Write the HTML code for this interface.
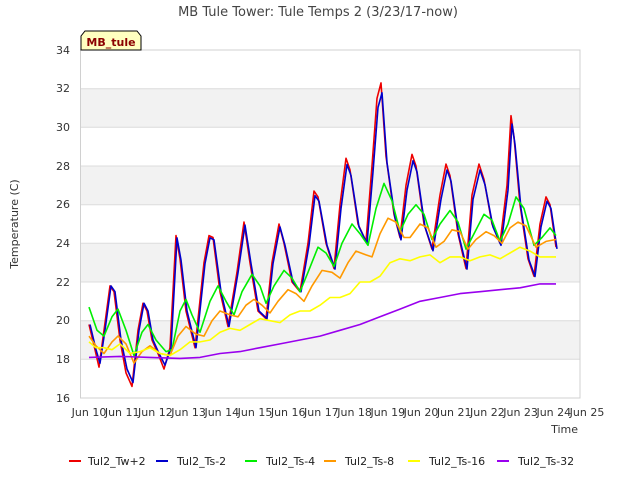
<!DOCTYPE html>
<html><head><meta charset="utf-8"><style>
body{margin:0;background:#fff;width:640px;height:480px;overflow:hidden;font-family:"DejaVu Sans","Liberation Sans",sans-serif}
</style></head><body>
<svg id="s" width="640" height="480" xmlns="http://www.w3.org/2000/svg" font-family="DejaVu Sans, Liberation Sans, sans-serif">
<rect width="640" height="480" fill="#fff"/>
<g fill="#f2f2f2">
<rect x="80" y="88.7" width="500" height="38.6"/>
<rect x="80" y="166" width="500" height="38.7"/>
<rect x="80" y="243.3" width="500" height="38.7"/>
<rect x="80" y="320.7" width="500" height="38.6"/>
</g>
<g stroke="#dcdcdc" stroke-width="1">
<line x1="80" y1="50" x2="580" y2="50"/><line x1="80" y1="88.7" x2="580" y2="88.7"/><line x1="80" y1="127.3" x2="580" y2="127.3"/><line x1="80" y1="166" x2="580" y2="166"/><line x1="80" y1="204.7" x2="580" y2="204.7"/><line x1="80" y1="243.3" x2="580" y2="243.3"/><line x1="80" y1="282" x2="580" y2="282"/><line x1="80" y1="320.7" x2="580" y2="320.7"/><line x1="80" y1="359.3" x2="580" y2="359.3"/>
</g>
<rect x="80.5" y="50" width="499.5" height="348" fill="none" stroke="#d0d0d0"/>
<g font-size="11" fill="#333" text-anchor="end">
<text x="70" y="54">34</text><text x="70" y="92">32</text><text x="70" y="131">30</text><text x="70" y="170">28</text><text x="70" y="208">26</text><text x="70" y="247">24</text><text x="70" y="286">22</text><text x="70" y="324">20</text><text x="70" y="363">18</text><text x="70" y="402">16</text>
</g>
<g id="xl" font-size="11" fill="#333" text-anchor="middle"></g>
<text x="578" y="433" font-size="11" fill="#333" text-anchor="end">Time</text>
<text x="18" y="224" font-size="11" fill="#333" text-anchor="middle" transform="rotate(-90 18 224)">Temperature (C)</text>
<text x="318" y="16" font-size="13" fill="#444" text-anchor="middle">MB Tule Tower: Tule Temps 2 (3/23/17-now)</text>
<path d="M81 50 L81 36 L85 31 L137 31 L141 36 L141 50 Z" fill="#ffffc0" stroke="#000" stroke-width="1"/>
<text x="111" y="46" font-size="11" font-weight="bold" fill="#8b0000" text-anchor="middle">MB_tule</text>
<g id="lines" fill="none" stroke-width="1.6" stroke-linejoin="round"></g>
<g font-size="11" fill="#222">
<line x1="69" y1="461" x2="81" y2="461" stroke="#e00" stroke-width="2"/><text x="88" y="465">Tul2_Tw+2</text>
<line x1="156" y1="461" x2="168" y2="461" stroke="#00c" stroke-width="2"/><text x="177" y="465">Tul2_Ts-2</text>
<line x1="245" y1="461" x2="257" y2="461" stroke="#0e0" stroke-width="2"/><text x="266" y="465">Tul2_Ts-4</text>
<line x1="324" y1="461" x2="336" y2="461" stroke="#f90" stroke-width="2"/><text x="345" y="465">Tul2_Ts-8</text>
<line x1="408" y1="461" x2="420" y2="461" stroke="#ff0" stroke-width="2"/><text x="429" y="465">Tul2_Ts-16</text>
<line x1="497" y1="461" x2="509" y2="461" stroke="#90e" stroke-width="2"/><text x="518" y="465">Tul2_Ts-32</text>
</g>
</svg>
<script>
var NS="http://www.w3.org/2000/svg";
var xl=document.getElementById('xl');
for(var d=10;d<=25;d++){var t=document.createElementNS(NS,'text');var x=89+(d-10)*33.2;t.setAttribute('x',x);t.setAttribute('y',416);t.textContent='Jun '+d;xl.appendChild(t);}
function Y(v){return 398-(v-16)*19.333;}
var red=[[89,19.8],[95,18.5],[99,17.6],[104,19.5],[110,21.8],[114,21.5],[120,19],[126,17.3],[132,16.6],[138,19.5],[143,20.9],[147,20.5],[152,19],[158,18.3],[164,17.5],[170,18.6],[176,24.4],[180,23.2],[186,20.5],[195,18.6],[204,23],[209,24.4],[213,24.3],[220,21.5],[228,19.7],[237,22.5],[244,25.1],[250,23],[258,20.5],[266,20.1],[272,23],[279,25],[284,24],[292,22],[300,21.5],[308,24],[314,26.7],[318,26.4],[326,24],[334,22.7],[340,26],[346,28.4],[350,27.8],[358,25],[366,24.1],[372,28],[377,31.5],[381,32.3],[386,28.5],[394,25.5],[400,24.3],[406,27],[412,28.6],[416,28],[424,25],[432,23.7],[440,26.5],[446,28.1],[450,27.5],[458,24.5],[466,22.7],[472,26.5],[479,28.1],[484,27.3],[492,25],[500,24],[507,27],[511,30.6],[514,29.5],[520,26],[528,23.2],[534,22.3],[540,25],[546,26.4],[550,26],[556,23.8]];
var blue=red.map(function(p){var v=p[1];var m=v>22?(v-22)*0.05:0;return [p[0]+1,v-m+ (v<18?0.2:0)];});
var green=[[89,20.7],[97,19.5],[104,19.2],[112,20.2],[118,20.6],[126,19.5],[134,18.2],[142,19.4],[148,19.8],[156,19],[166,18.4],[172,18.5],[180,20.5],[186,21.1],[192,20.3],[200,19.4],[210,21],[218,21.8],[226,21],[234,20.3],[242,21.5],[252,22.4],[260,21.8],[266,20.9],[274,21.8],[284,22.6],[292,22.2],[300,21.5],[308,22.5],[318,23.8],[326,23.5],[334,22.8],[342,24],[352,25],[360,24.5],[368,23.9],[376,25.8],[384,27.1],[392,26.2],[400,24.6],[408,25.5],[416,26],[424,25.5],[432,24.2],[440,25],[450,25.7],[458,25.1],[466,23.7],[474,24.5],[484,25.5],[492,25.2],[500,24.1],[508,25],[516,26.4],[524,25.8],[534,23.9],[542,24.3],[550,24.8],[556,24.4]];
var orange=[[89,19.2],[96,18.7],[104,18.3],[112,18.9],[118,19.2],[126,18.8],[134,17.8],[142,18.4],[150,18.7],[160,18.3],[170,18.2],[178,19.2],[186,19.7],[196,19.3],[204,19.2],[212,20],[220,20.5],[230,20.3],[238,20.2],[246,20.8],[254,21.1],[262,20.8],[270,20.4],[278,21],[288,21.6],[296,21.4],[304,21],[312,21.8],[322,22.6],[332,22.5],[340,22.2],[348,23],[356,23.6],[366,23.4],[372,23.3],[380,24.5],[388,25.3],[396,25.1],[404,24.3],[410,24.3],[420,25],[428,24.8],[436,23.8],[444,24.1],[452,24.7],[460,24.6],[468,23.7],[476,24.2],[486,24.6],[494,24.4],[502,24],[510,24.8],[518,25.1],[526,24.9],[536,23.8],[546,24.1],[556,24.2]];
var yellow=[[89,18.9],[96,18.6],[104,18.6],[112,18.5],[120,18.8],[130,18.3],[140,18.4],[150,18.6],[160,18.3],[170,18.2],[180,18.5],[190,18.9],[200,18.9],[210,19],[220,19.4],[230,19.6],[240,19.5],[250,19.8],[260,20.1],[270,20],[280,19.9],[290,20.3],[300,20.5],[310,20.5],[320,20.8],[330,21.2],[340,21.2],[350,21.4],[360,22],[370,22],[380,22.3],[390,23],[400,23.2],[410,23.1],[420,23.3],[430,23.4],[440,23],[450,23.3],[460,23.3],[470,23.1],[480,23.3],[490,23.4],[500,23.2],[510,23.5],[520,23.8],[530,23.6],[540,23.3],[556,23.3]];
var purple=[[89,18.1],[120,18.15],[150,18.1],[180,18.05],[200,18.1],[220,18.3],[240,18.4],[260,18.6],[280,18.8],[300,19],[320,19.2],[340,19.5],[360,19.8],[380,20.2],[400,20.6],[420,21],[440,21.2],[460,21.4],[480,21.5],[500,21.6],[520,21.7],[540,21.9],[556,21.9]];
var g=document.getElementById('lines');
[[red,'#e00'],[blue,'#00c'],[green,'#0e0'],[orange,'#f90'],[yellow,'#ff0'],[purple,'#90e']].forEach(function(s){
var p=document.createElementNS(NS,'polyline');
p.setAttribute('points',s[0].map(function(q){return q[0]+','+Y(q[1]).toFixed(1);}).join(' '));
p.setAttribute('stroke',s[1]);g.appendChild(p);});
</script>
</body></html>
